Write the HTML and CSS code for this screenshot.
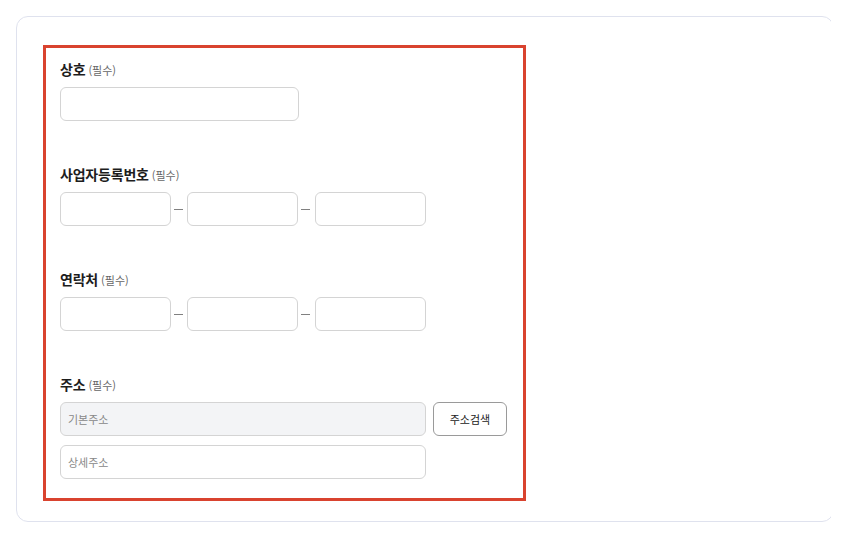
FILE: index.html
```html
<!DOCTYPE html>
<html lang="ko">
<head>
<meta charset="utf-8">
<title>판매자 정보</title>
<link rel="stylesheet" href="styles.css">
</head>
<body>

<div class="card">
	<form class="seller-form">
		<div class="field">
			<label class="field-label">상호<span class="req">(필수)</span></label>
			<input class="inp inp-name" type="text">
		</div>

		<div class="field">
			<label class="field-label">사업자등록번호<span class="req">(필수)</span></label>
			<div class="split">
				<input class="inp inp-part" type="text">
				<span class="dash"></span>
				<input class="inp inp-part" type="text">
				<span class="dash"></span>
				<input class="inp inp-part" type="text">
			</div>
		</div>

		<div class="field">
			<label class="field-label">연락처<span class="req">(필수)</span></label>
			<div class="split">
				<input class="inp inp-part" type="text">
				<span class="dash"></span>
				<input class="inp inp-part" type="text">
				<span class="dash"></span>
				<input class="inp inp-part" type="text">
			</div>
		</div>

		<div class="field">
			<label class="field-label">주소<span class="req">(필수)</span></label>
			<div class="addr-row">
				<input class="inp inp-addr inp-readonly" type="text" placeholder="기본주소" readonly>
				<button type="button" class="btn-search">주소검색</button>
			</div>
			<input class="inp inp-addr" type="text" placeholder="상세주소">
		</div>
	</form>
</div>

</body>
</html>
```

FILE: styles.css
```css
html {
	font-family: "Noto Sans CJK KR", "Noto Sans", sans-serif;
}
body {
	margin: 16px;
	background: #fff;
	color: #222;
}

.card {
	width: 818px;
	box-sizing: border-box;
	border: 1px solid #dfe2ee;
	border-radius: 12px;
	padding: 28px 26px 20px;
}

.seller-form {
	width: 483px;
	box-sizing: border-box;
	border: 3px solid #d9432f;
	padding: 11px 14px 19px;
}

.field + .field {
	margin-top: 43px;
}

.field-label {
	display: block;
	height: 20px;
	line-height: 20px;
	font-size: 14px;
	font-weight: 700;
	letter-spacing: -0.2px;
	color: #1d1d1d;
	margin-bottom: 8px;
}
.field-label .req {
	margin-left: 3px;
	font-size: 11px;
	font-weight: 400;
	letter-spacing: 0;
	color: #666;
}

.inp {
	display: block;
	box-sizing: border-box;
	height: 34px;
	border: 1px solid #d4d4d4;
	border-radius: 6px;
	background: #fff;
	padding: 0 7px;
	font-family: inherit;
	font-size: 11px;
	color: #333;
	outline: none;
}
.inp::placeholder {
	color: #888;
}
.inp-name {
	width: 239px;
}
.inp-part {
	width: 111px;
}
.inp-addr {
	width: 366px;
}
.inp-readonly {
	background: #f3f4f6;
}

.split {
	display: flex;
	align-items: center;
}
.dash {
	width: 9px;
	height: 1px;
	background: #808080;
	margin: 0 4px 0 3px;
}
.split .inp-part:last-child {
	margin-left: 1px;
}

.addr-row {
	display: flex;
	gap: 7px;
	margin-bottom: 9px;
}
.btn-search {
	width: 74px;
	height: 34px;
	box-sizing: border-box;
	border: 1px solid #9a9a9a;
	border-radius: 6px;
	background: #fff;
	font-family: inherit;
	font-size: 11px;
	color: #222;
	cursor: pointer;
	padding: 0;
}
```
